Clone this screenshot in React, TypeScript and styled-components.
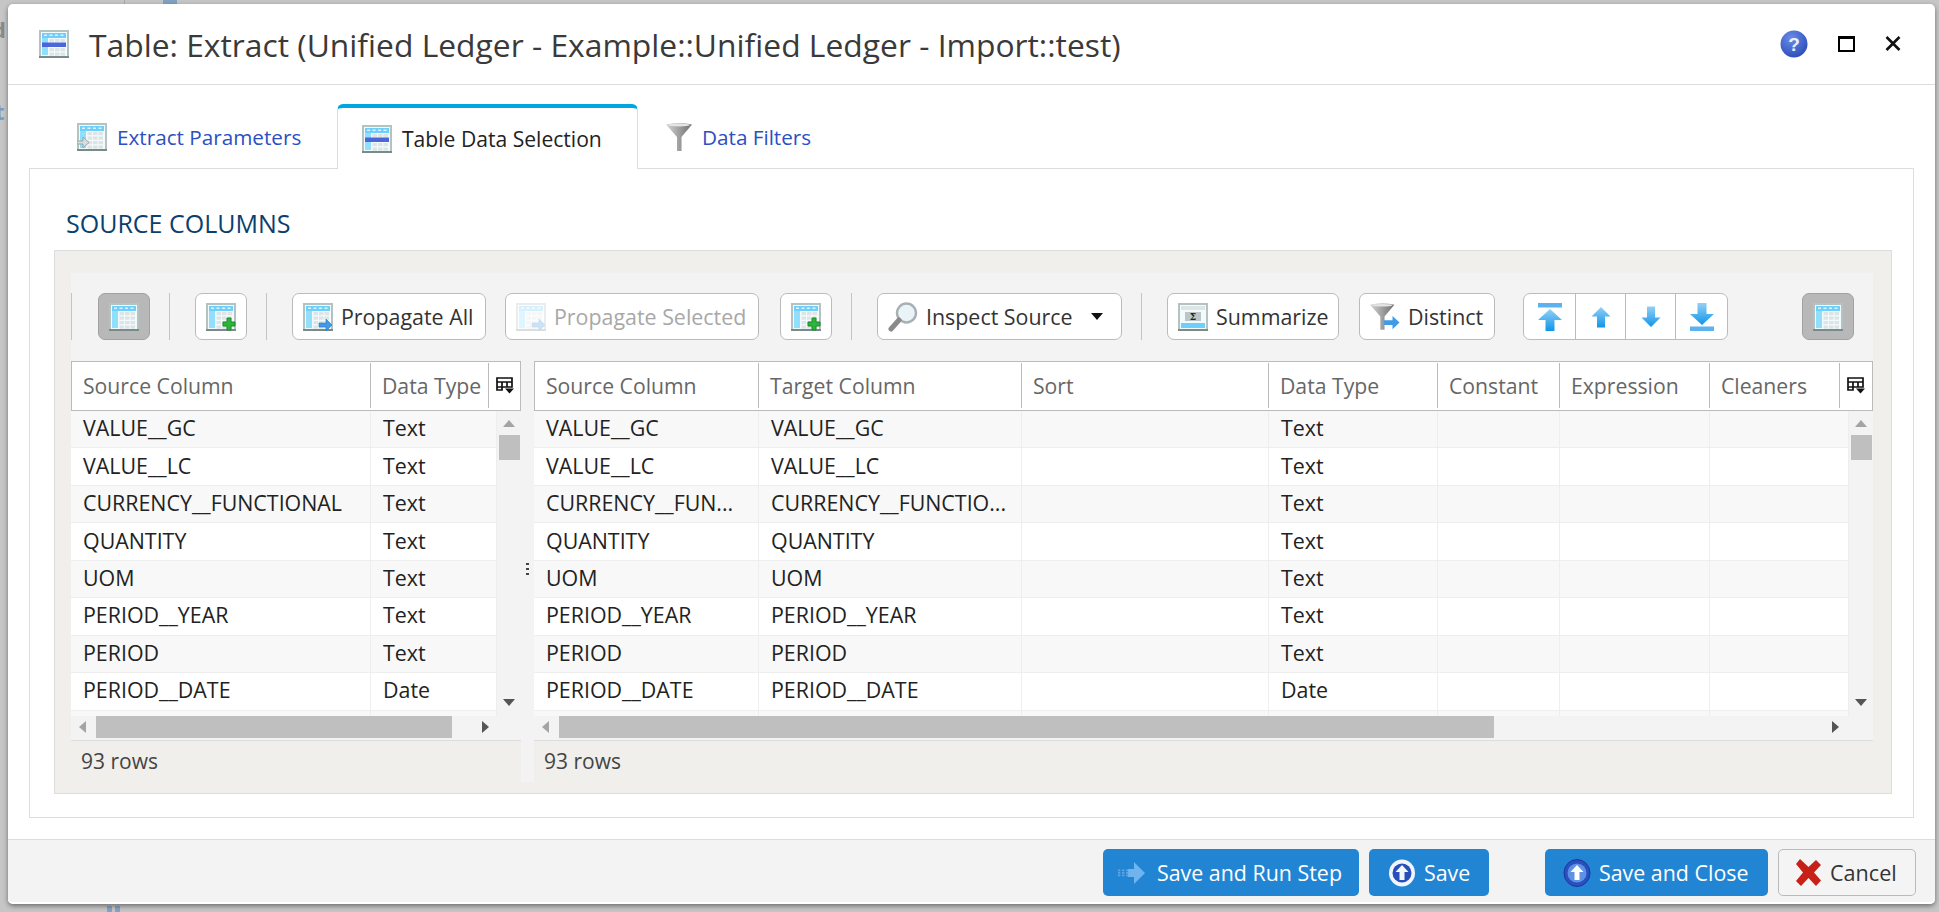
import React from "react";
import styled, { createGlobalStyle } from "styled-components";

const Global = createGlobalStyle`
  html, body { margin: 0; height: 100%; overflow: hidden; background: #c6c6c6; }
  body { font-family: "Open Sans", "Noto Sans", "Liberation Sans", sans-serif; }
  * { box-sizing: border-box; }
  svg { display: block; flex: none; }
`;

const Backdrop = styled.div`
  position: relative; width: 1939px; height: 912px; padding: 4px 4px 8px 8px; overflow: hidden;
`;
const BehindMark = styled.span<{ $x: number; $y: number; $c: string }>`
  position: absolute; left: ${p => p.$x}px; top: ${p => p.$y}px; color: ${p => p.$c};
  font-size: 22px; font-weight: 700; line-height: 22px;
`;
const BehindRule = styled.i`
  position: absolute; left: 124px; top: 0; width: 1px; height: 4px; background: #aaa;
`;
const BehindDot = styled.i`
  position: absolute; left: 163px; top: 0; width: 14px; height: 4px; background: #7fa3c0;
`;
const BehindDots = styled.i`
  position: absolute; left: 107px; top: 906px; width: 13px; height: 6px;
  background: repeating-linear-gradient(90deg, #86a3c6 0 5px, transparent 5px 8px);
`;
const Modal = styled.div`
  position: relative; width: 100%; height: 100%; background: #fff; border-radius: 5px;
  display: flex; flex-direction: column; box-shadow: 0 2px 5px rgba(0,0,0,.45);
`;
const Header = styled.header`
  height: 81px; flex: none; display: flex; align-items: center; padding: 0 34px 1px 31px;
  border-bottom: 1px solid #ddd;
`;
const Title = styled.h1`
  margin: 0 0 0 20px; flex: 1; font-size: 31.8px; font-weight: 400; color: #3a3a3a; white-space: nowrap;
  transform: translateY(1px);
`;
const HeaderActions = styled.div`
  display: flex; align-items: center; gap: 30px;
`;
const TabStrip = styled.nav`
  height: 84px; flex: none; display: flex; align-items: flex-end; padding-left: 21px; margin-bottom: -1px;
`;
const Tab = styled.div<{ $w: number; $pad: number; $active?: boolean }>`
  width: ${p => p.$w}px; height: ${p => p.$active ? 65 : 64}px; display: flex; align-items: center; gap: 10px;
  padding-left: ${p => p.$pad}px; font-size: ${p => p.$active ? 21.1 : 20.7}px; position: relative; z-index: 1;
  color: ${p => p.$active ? "#222" : "#2b4fc4"};
  background: ${p => p.$active ? "#fff" : "transparent"};
  white-space: nowrap;
  ${p => p.$active ? `border: 1px solid #ddd; border-bottom: 0; border-top: 4px solid #00a5e2; border-radius: 6px 6px 0 0;` : `padding-bottom: 1px;`}
`;
const TabBody = styled.section`
  flex: none; height: 650px; margin: 0 21px 0 21px; border: 1px solid #ddd; padding: 0 21px 23px 24px;
  display: flex; flex-direction: column;
`;
const SectionTitle = styled.h2`
  margin: 0; height: 81px; padding: 39px 0 0 12px; font-size: 25px; font-weight: 400; color: #0b3f6f; line-height: 30px; white-space: nowrap;
`;
const Panel = styled.div`
  flex: 1; background: #f0efec; border: 1px solid #ddd; padding: 22px 18px 12px 16px; display: flex; flex-direction: column; min-height: 0;
`;
const Toolbar = styled.div`
  height: 88px; flex: none; background: #f3f3f3; display: flex; align-items: flex-start; padding-top: 20px;
`;
const Divider = styled.span`
  width: 1px; height: 47px; background: #c4c4c4; margin-right: 25px; margin-left: 19px; flex: none;
  &:first-child { margin-left: 0; margin-right: 26px; }
`;
const ToolButton = styled.button<{ $w: number; $muted?: boolean; $mr?: number }>`
  width: ${p => p.$w}px; height: 47px; flex: none; margin: 0 ${p => p.$mr ?? 0}px 0 0; padding: 0 0 0 10px;
  display: flex; align-items: center; gap: 8px; background: #fff; border: 1px solid #bbb; border-radius: 7px;
  font: inherit; font-size: 21.4px; color: ${p => p.$muted ? "#a8a8a8" : "#333"}; white-space: nowrap;
`;
const ToggleButton = styled.button<{ $auto?: boolean }>`
  width: 52px; height: 47px; flex: none; padding: 0; display: flex; align-items: center; justify-content: center;
  background: #b8b8b8; border: 1px solid #a2a2a2; border-radius: 7px;
  margin-left: ${p => p.$auto ? "auto" : "0"}; margin-right: ${p => p.$auto ? "19px" : "0"};
`;
const IconButton = styled.button<{ $w: number }>`
  width: ${p => p.$w}px; height: 47px; flex: none; padding: 0; display: flex; align-items: center; justify-content: center;
  background: #fff; border: 1px solid #bbb; border-radius: 7px;
`;
const Caret = styled.span`
  margin-left: 10px; width: 0; height: 0; border: 6.5px solid transparent; border-top: 7px solid #111; border-bottom: 0;
`;
const MoveGroup = styled.div`
  width: 205px; height: 47px; flex: none; margin-left: 28px; display: grid; grid-template-columns: 52px 50px 50px 1fr;
  background: #fff; border: 1px solid #bbb; border-radius: 7px;
`;
const MoveCell = styled.button`
  padding: 0; border: 0; border-right: 1px solid #bbb; background: transparent; display: flex; align-items: center; justify-content: center;
  &:last-child { border-right: 0; }
`;
const Panes = styled.div`
  flex: 1; display: grid; grid-template-columns: 450px 13px 1fr; min-height: 0;
`;
const Splitter = styled.div`
  background: #f3f3f3; position: relative; margin-bottom: -1px;
  &::after { content: ""; position: absolute; left: 5px; top: 202px; width: 3px; height: 14px;
    background: repeating-linear-gradient(#444 0 2px, transparent 2px 5px); }
`;
const Pane = styled.div`
  display: flex; flex-direction: column; min-width: 0;
`;
const HeadRow = styled.div<{ $cols: string }>`
  height: 50px; flex: none; display: grid; grid-template-columns: ${p => p.$cols}; background: #fff;
  border: 1px solid #bbb; border-bottom: 1px solid #bbb;
  padding-top: 1px;
`;
const HeadCell = styled.div`
  display: flex; align-items: center; padding-left: 11px; font-size: 21.2px; color: #666; border-right: 1px solid #bbb;
  white-space: nowrap; overflow: hidden; margin-bottom: 2px;
  &:last-child { border-right: 0; padding-left: 7px; }
`;
const BodyArea = styled.div`
  height: 305px; flex: none; display: flex; background: #f3f3f3;
`;
const Rows = styled.div`
  flex: 1; min-width: 0; overflow: hidden;
`;
const DataRow = styled.div<{ $cols: string; $alt: boolean }>`
  height: 37.45px; display: grid; grid-template-columns: ${p => p.$cols};
  background: ${p => p.$alt ? "#f8f8f8" : "#fff"}; border-bottom: 1px solid #eee;
`;
const Cell = styled.div`
  display: flex; align-items: center; padding: 0 0 3px 12px; font-size: 21.4px; color: #222; border-right: 1px solid #eee;
  white-space: nowrap; overflow: hidden;
`;
const VScroll = styled.div`
  width: 24px; flex: none; display: flex; flex-direction: column; align-items: center; padding-top: 9px; padding-bottom: 10px;
`;
const VThumb = styled.div`
  width: 21px; height: 25px; margin-top: 8px; background: #bfbfbf;
`;
const ScrollFill = styled.span`
  flex: 1;
`;
const HScroll = styled.div`
  height: 24px; flex: none; display: flex; align-items: center; background: #f3f3f3;
  padding: 0 0 2px 8px;
`;
const HThumb = styled.div<{ $w: number; $ml: number; $mr: number }>`
  width: ${p => p.$w}px; height: 22px; background: #bfbfbf; margin-left: ${p => p.$ml}px; margin-right: ${p => p.$mr}px; flex: none;
`;
const PaneFoot = styled.div`
  flex: 1; display: flex; align-items: center; padding: 0 0 1px 10px; border-top: 1px solid #ddd; font-size: 21px; color: #444;
`;
const Footer = styled.footer`
  flex: 1; margin-top: 21px; background: #f3f3f3; border-top: 1px solid #ddd; border-bottom: 2px solid #fff;
  border-radius: 0 0 5px 5px; display: flex; align-items: flex-start; padding: 9px 0 0 1095px;
`;
const PrimaryButton = styled.button<{ $w: number; $mr: number; $pl: number; $gap: number }>`
  width: ${p => p.$w}px; height: 47px; margin: 0 ${p => p.$mr}px 0 0; flex: none; padding: 0 0 0 ${p => p.$pl}px;
  display: flex; align-items: center; gap: ${p => p.$gap}px; background: #2285d3; border: 0; border-radius: 5px; color: #fff;
  font: inherit; font-size: 21.4px; white-space: nowrap;
`;
const CancelButton = styled.button`
  width: 138px; height: 47px; flex: none; padding: 0 0 0 17px; display: flex; align-items: center; gap: 9px;
  background: #f4f4f4; border: 1px solid #bbb; border-radius: 5px; font: inherit; font-size: 21.6px; color: #333;
`;

type Deco = "none" | "plus" | "arrow" | "left" | "band" | "sigma";
const TableIcon = ({ deco = "none", faded, w = 30 }: { deco?: Deco; faded?: boolean; w?: number }) => (
  <svg width={w} height={(w * 28) / 30} viewBox="0 0 30 28" opacity={faded ? 0.28 : 1}>
    <rect x="0" y="0" width="30" height="28" fill="#b4c2c2" />
    <rect x="0" y="26" width="30" height="2" fill="#788a8a" />
    <rect x="2" y="2" width="26" height="24" fill="#f3fafd" />
    {deco !== "sigma" && <rect x="3" y="3" width="24" height="5" fill="#6ecffb" />}
    {deco !== "sigma" && <rect x="3" y="8" width="6" height="17" fill="#8fdffd" />}
    {deco !== "sigma" &&
      [9, 13.5, 18, 22.5].map(y =>
        [10.5, 16, 21.5].map(x => <rect key={x + "-" + y} x={x} y={y} width="4.5" height="3.2" fill="#dde4e4" />)
      )}
    {deco !== "sigma" && [4, 9.5, 15, 20.5].map(x => <rect key={x} x={x + 1} y="4.5" width="3" height="1.5" fill="#d7f3ff" />)}
    {deco === "band" && <rect x="3" y="12.5" width="24" height="4.5" fill="#4b66d8" />}
    {deco === "plus" && (
      <path d="M21 15h4v4h4v4h-4v4h-4v-4h-4v-4h4z" fill="#2db53a" stroke="#1a8a28" strokeWidth="1" />
    )}
    {deco === "arrow" && <path d="M16 20h7v-4l6 6-6 6v-4h-7z" fill="#3f9be8" stroke="#2278c4" strokeWidth=".6" />}
    {deco === "left" && <path d="M0 18h6v-4l6 5.500-6 5.500v-4H0z" fill="#d7dede" stroke="#9aa6a6" strokeWidth="1" />}
    {deco === "sigma" && (
      <>
        <rect x="3" y="3" width="24" height="4" fill="#dfe5e5" />
        <rect x="7" y="9" width="16" height="9" fill="#bcc6c6" />
        <text x="15" y="17" fontSize="9" fontWeight="700" textAnchor="middle" fill="#222" fontFamily="DejaVu Serif, serif">Σ</text>
        <rect x="3" y="20" width="24" height="5" fill="#6ecffb" />
      </>
    )}
  </svg>
);

const Funnel = ({ arrow, id }: { arrow?: boolean; id: string }) => (
  <svg width={arrow ? 30 : 26} height={arrow ? 27 : 28} viewBox={arrow ? "0 0 32 28" : "0 0 26 28"}>
    <defs>
      <linearGradient id={id} x1="0" x2="1" y1="0" y2="0">
        <stop offset="0" stopColor="#d6d6d6" />
        <stop offset=".55" stopColor="#9a9a9a" />
        <stop offset="1" stopColor="#6f6f6f" />
      </linearGradient>
    </defs>
    <path d="M0 1.500Q13-1 26 1.500L15.500 14V28h-4.500V14z" fill={`url(#${id})`} />
    <ellipse cx="13" cy="2" rx="11" ry="1.400" fill="#e4e4e4" />
    {arrow && <path d="M15 18h9v-4.500l7.500 7-7.500 7V23h-9z" fill="#3f9be8" />}
  </svg>
);

const Lens = () => (
  <svg width="30" height="30" viewBox="0 0 30 30">
    <circle cx="18.500" cy="11" r="9.500" fill="#eaf3f8" stroke="#a9b0b3" strokeWidth="2.400" />
    <path d="M11 18L3 27" stroke="#8a8a8a" strokeWidth="5" strokeLinecap="round" />
  </svg>
);

const MoveArrow = ({ dir, bar, id }: { dir: "up" | "down"; bar?: boolean; id: string }) => {
  const inner = bar
    ? <><rect x="1" y="0" width="24" height="4.500" fill="#5cb2ee" /><path d="M13 6L25 17H17.500V28H8.500V17H1z" fill={`url(#${id})`} /></>
    : <path d="M13 4L22.500 13.500H17V24.500H9V13.500H3.500z" fill={`url(#${id})`} />;
  return (
    <svg width="26" height="28" viewBox="0 0 26 28" style={dir === "down" ? { transform: "rotate(180deg)" } : undefined}>
      <defs>
        <linearGradient id={id} x1="0" x2="0" y1="0" y2="1">
          <stop offset="0" stopColor={dir === "up" ? "#93d0f5" : "#0f95ea"} />
          <stop offset="1" stopColor={dir === "up" ? "#0f95ea" : "#93d0f5"} />
        </linearGradient>
      </defs>
      {inner}
    </svg>
  );
};

const ColumnsMenu = () => (
  <svg width="19" height="17" viewBox="0 0 19 17">
    <path d="M1 1h15v9H1zM1 5h15M6 5v8H1v-3M11 5v5" fill="none" stroke="#111" strokeWidth="1.700" />
    <path d="M9 11.500h9l-4.500 5z" fill="#111" />
  </svg>
);

const Tri = ({ dir }: { dir: "up" | "down" | "left" | "right" }) => {
  const paths = { up: "M0 7L6 0l6 7z", down: "M0 0h12L6 7z", left: "M7 0v12L0 6z", right: "M0 0v12l7-6z" };
  const horizontal = dir === "left" || dir === "right";
  return (
    <svg width={horizontal ? 7 : 12} height={horizontal ? 12 : 7} viewBox={horizontal ? "0 0 7 12" : "0 0 12 7"}>
      <path d={paths[dir]} fill={dir === "up" || dir === "left" ? "#a4a4a4" : "#555"} />
    </svg>
  );
};

const HelpIcon = () => (
  <svg width="28" height="28" viewBox="0 0 28 28">
    <defs>
      <radialGradient id="helpg" cx=".4" cy=".3" r=".8">
        <stop offset="0" stopColor="#6a8ce8" />
        <stop offset="1" stopColor="#2647b5" />
      </radialGradient>
    </defs>
    <circle cx="14" cy="14" r="13.500" fill="url(#helpg)" />
    <text x="14" y="20.500" textAnchor="middle" fontSize="19" fontWeight="700" fill="#eef" fontFamily="Liberation Sans, sans-serif">?</text>
  </svg>
);
const MaxIcon = () => (
  <svg width="17" height="16" viewBox="0 0 17 16">
    <rect x="1" y="1.500" width="15" height="13.500" fill="#fff" stroke="#000" strokeWidth="2" />
    <rect x="0" y="0" width="17" height="3" fill="#000" />
  </svg>
);
const CloseIcon = () => (
  <svg width="16" height="15" viewBox="0 0 16 15">
    <path d="M1.500 1L14.500 14M14.500 1L1.500 14" stroke="#111" strokeWidth="2.600" />
  </svg>
);
const RunIcon = () => (
  <svg width="28" height="26" viewBox="0 0 28 26">
    <path d="M10 9h6V2l11 11-11 11v-7h-6z" fill="#6fb4ee" />
    {[0, 4, 8].map(x => [9.5, 12, 14.5].map(y => <rect key={x + "-" + y} x={x} y={y} width="2.400" height="1.800" fill="#5aa5e5" />))}
  </svg>
);
const CircleUp = ({ light }: { light?: boolean }) => (
  <svg width="28" height="28" viewBox="0 0 28 28">
    <ellipse cx="14" cy="14" rx="13" ry="13.500" fill={light ? "#f2f4ff" : "#2a4fc0"} stroke={light ? "#2a4fc0" : "#1c3896"} strokeWidth={light ? 0 : 1} />
    <ellipse cx="14" cy="14" rx="9.500" ry="9.500" fill={light ? "#2450b8" : "#5d93e2"} />
    <path d="M14 6l6.500 7H16.500v8h-5v-8H7.500z" fill={light ? "#f5f7ff" : "#fff"} />
  </svg>
);
const XIcon = () => (
  <svg width="25" height="27" viewBox="0 0 25 27">
    <path d="M4 0L12.500 8 20 1l5 5-7 7.500 7 8-5 5.500-7.500-8L5 27 0 22l7-8.500L0 5z" fill="#c81f17" />
  </svg>
);

const rows: [string, string, string][] = [
  ["VALUE__GC", "VALUE__GC", "Text"],
  ["VALUE__LC", "VALUE__LC", "Text"],
  ["CURRENCY__FUNCTIONAL", "CURRENCY__FUN...", "Text"],
  ["QUANTITY", "QUANTITY", "Text"],
  ["UOM", "UOM", "Text"],
  ["PERIOD__YEAR", "PERIOD__YEAR", "Text"],
  ["PERIOD", "PERIOD", "Text"],
  ["PERIOD__DATE", "PERIOD__DATE", "Date"],
];
const targetLabel = (s: string) => (s.startsWith("CURRENCY") ? "CURRENCY__FUNCTIO..." : s);

const leftHead = "299px 118px 1fr";
const leftBody = "300px 1fr";
const rightHead = "224px 263px 247px 169px 122px 150px 130px 1fr";
const rightBody = "225px 263px 247px 169px 122px 150px 1fr";

const VerticalBar = () => (
  <VScroll>
    <Tri dir="up" />
    <VThumb />
    <ScrollFill />
    <Tri dir="down" />
  </VScroll>
);

export default function App() {
  return (
    <Backdrop>
      <Global />
      <BehindMark $x={-8} $y={18} $c="#8a8a8a">d</BehindMark>
      <BehindMark $x={-5} $y={100} $c="#7d9ac0">t</BehindMark>
      <BehindRule />
      <BehindDot />
      <BehindDots />
      <Modal>
        <Header>
          <TableIcon deco="band" />
          <Title>Table: Extract (Unified Ledger - Example::Unified Ledger - Import::test)</Title>
          <HeaderActions>
            <HelpIcon />
            <MaxIcon />
            <CloseIcon />
          </HeaderActions>
        </Header>
        <TabStrip>
          <Tab $w={308} $pad={48}><TableIcon deco="left" />Extract Parameters</Tab>
          <Tab $w={301} $pad={24} $active><TableIcon deco="band" />Table Data Selection</Tab>
          <Tab $w={220} $pad={28}><Funnel id="f1" /><span>Data Filters</span></Tab>
        </TabStrip>
        <TabBody>
          <SectionTitle>SOURCE COLUMNS</SectionTitle>
          <Panel>
            <Toolbar>
              <Divider />
              <ToggleButton><TableIcon /></ToggleButton>
              <Divider />
              <IconButton $w={52}><TableIcon deco="plus" /></IconButton>
              <Divider />
              <ToolButton $w={194} $mr={19}><TableIcon deco="arrow" />Propagate All</ToolButton>
              <ToolButton $w={254} $mr={21} $muted><TableIcon deco="arrow" faded />Propagate Selected</ToolButton>
              <IconButton $w={52}><TableIcon deco="plus" /></IconButton>
              <Divider />
              <ToolButton $w={245}><Lens />Inspect Source<Caret /></ToolButton>
              <Divider />
              <ToolButton $w={172} $mr={20}><TableIcon deco="sigma" />Summarize</ToolButton>
              <ToolButton $w={136}><Funnel id="f2" arrow />Distinct</ToolButton>
              <MoveGroup>
                <MoveCell><MoveArrow dir="up" bar id="m1" /></MoveCell>
                <MoveCell><MoveArrow dir="up" id="m2" /></MoveCell>
                <MoveCell><MoveArrow dir="down" id="m3" /></MoveCell>
                <MoveCell><MoveArrow dir="down" bar id="m4" /></MoveCell>
              </MoveGroup>
              <ToggleButton $auto><TableIcon /></ToggleButton>
            </Toolbar>
            <Panes>
              <Pane>
                <HeadRow $cols={leftHead}>
                  <HeadCell>Source Column</HeadCell>
                  <HeadCell>Data Type</HeadCell>
                  <HeadCell><ColumnsMenu /></HeadCell>
                </HeadRow>
                <BodyArea>
                  <Rows>
                    {rows.map((r, i) => (
                      <DataRow key={r[0]} $cols={leftBody} $alt={i % 2 === 0}>
                        <Cell>{r[0]}</Cell>
                        <Cell>{r[2]}</Cell>
                      </DataRow>
                    ))}
                    <DataRow $cols={leftBody} $alt><Cell /><Cell /></DataRow>
                  </Rows>
                  <VerticalBar />
                </BodyArea>
                <HScroll>
                  <Tri dir="left" />
                  <HThumb $w={356} $ml={10} $mr={30} />
                  <Tri dir="right" />
                </HScroll>
                <PaneFoot>93 rows</PaneFoot>
              </Pane>
              <Splitter />
              <Pane>
                <HeadRow $cols={rightHead}>
                  <HeadCell>Source Column</HeadCell>
                  <HeadCell>Target Column</HeadCell>
                  <HeadCell>Sort</HeadCell>
                  <HeadCell>Data Type</HeadCell>
                  <HeadCell>Constant</HeadCell>
                  <HeadCell>Expression</HeadCell>
                  <HeadCell>Cleaners</HeadCell>
                  <HeadCell><ColumnsMenu /></HeadCell>
                </HeadRow>
                <BodyArea>
                  <Rows>
                    {rows.map((r, i) => (
                      <DataRow key={r[0]} $cols={rightBody} $alt={i % 2 === 0}>
                        <Cell>{r[1]}</Cell>
                        <Cell>{targetLabel(r[0])}</Cell>
                        <Cell />
                        <Cell>{r[2]}</Cell>
                        <Cell /><Cell /><Cell />
                      </DataRow>
                    ))}
                    <DataRow $cols={rightBody} $alt><Cell /><Cell /><Cell /><Cell /><Cell /><Cell /><Cell /></DataRow>
                  </Rows>
                  <VerticalBar />
                </BodyArea>
                <HScroll>
                  <Tri dir="left" />
                  <HThumb $w={935} $ml={10} $mr={338} />
                  <Tri dir="right" />
                </HScroll>
                <PaneFoot>93 rows</PaneFoot>
              </Pane>
            </Panes>
          </Panel>
        </TabBody>
        <Footer>
          <PrimaryButton $w={256} $mr={10} $pl={15} $gap={11}><RunIcon />Save and Run Step</PrimaryButton>
          <PrimaryButton $w={120} $mr={56} $pl={19} $gap={8}><CircleUp light />Save</PrimaryButton>
          <PrimaryButton $w={223} $mr={10} $pl={18} $gap={8}><CircleUp />Save and Close</PrimaryButton>
          <CancelButton><XIcon />Cancel</CancelButton>
        </Footer>
      </Modal>
    </Backdrop>
  );
}
